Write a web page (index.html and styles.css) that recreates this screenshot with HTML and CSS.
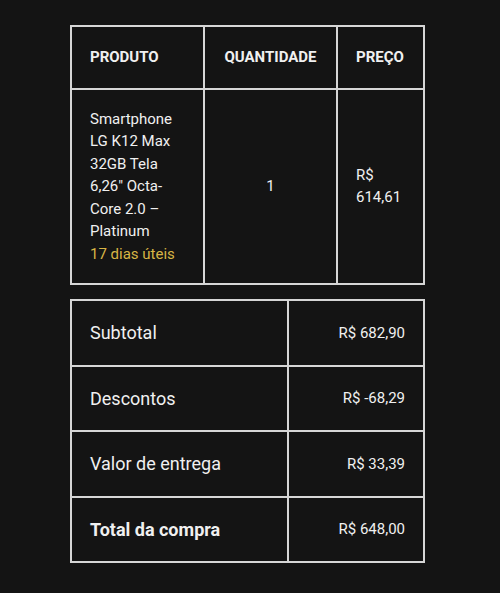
FILE: index.html
```html
<!DOCTYPE html>
<html lang="pt-BR">
<head>
  <meta charset="UTF-8" />
  <meta name="viewport" content="width=device-width, initial-scale=1.0">
  <title>Resumo do Pedido</title>
  <link rel="stylesheet" href="styles.css">
</head>
<body>
  <div class="resumo">
    <table class="produtos">
      <thead>
        <tr>
          <th class="col-produto">PRODUTO</th>
          <th class="col-qtd">QUANTIDADE</th>
          <th class="col-preco">PREÇO</th>
        </tr>
      </thead>
      <tbody>
        <tr>
          <td>
            Smartphone LG K12 Max 32GB Tela 6,26" Octa-Core 2.0 – Platinum
            <span class="prazo">17 dias úteis</span>
          </td>
          <td class="qtd">1</td>
          <td>R$ 614,61</td>
        </tr>
      </tbody>
    </table>

    <table class="totais">
      <tr>
        <td class="rotulo">Subtotal</td>
        <td class="valor">R$ 682,90</td>
      </tr>
      <tr>
        <td class="rotulo">Descontos</td>
        <td class="valor">R$ -68,29</td>
      </tr>
      <tr>
        <td class="rotulo">Valor de entrega</td>
        <td class="valor">R$ 33,39</td>
      </tr>
      <tr class="total">
        <td class="rotulo">Total da compra</td>
        <td class="valor">R$ 648,00</td>
      </tr>
    </table>
  </div>
</body>
</html>
```

FILE: styles.css
```css
* {
  box-sizing: border-box;
  margin: 0;
  padding: 0;
}

body {
  font-family: 'Roboto', sans-serif;
  background-color: #141414;
  color: #f0f0f0;
}

.resumo {
  width: 355px;
  margin: 25px 0 0 70px;
}

table {
  width: 100%;
  border-collapse: collapse;
  table-layout: fixed;
}

th, td {
  border: 2px solid #d6d6d6;
  padding: 18px;
  font-size: 15px;
  line-height: 1.5;
  text-align: left;
  vertical-align: middle;
}

th {
  padding: 19px 18px;
  font-weight: 700;
}

.col-produto {
  width: 133px;
}

.col-qtd {
  width: 133px;
  text-align: center;
}

.qtd {
  text-align: center;
}

.prazo {
  display: block;
  color: #d8b545;
}

.totais {
  margin-top: 14px;
}

.totais td {
  height: 65.5px;
  padding: 0 18px;
}

.rotulo {
  width: 217px;
  font-size: 18px;
}

.valor {
  text-align: right;
  font-size: 15px;
}

.total .rotulo {
  font-weight: 700;
}
```
